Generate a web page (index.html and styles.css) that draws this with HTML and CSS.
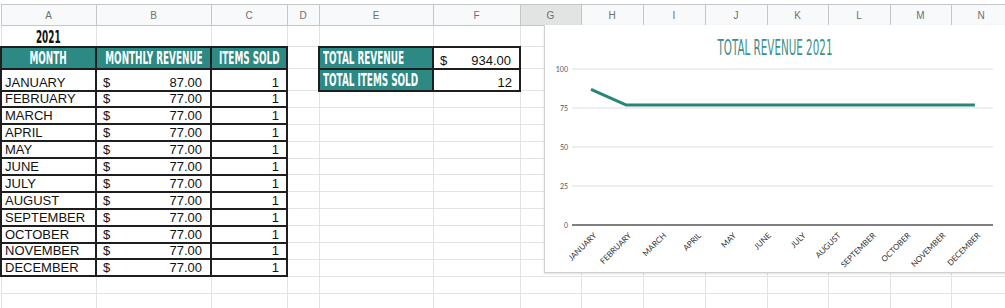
FILE: index.html
```html
<!DOCTYPE html>
<html>
<head>
<meta charset="utf-8">
<link rel="stylesheet" href="styles.css">
</head>
<body>
<div class="sheet">
  <div class="topstrip"></div>
  <table class="grid">
    <colgroup>
      <col class="cA"><col class="cB"><col class="cC"><col class="cD"><col class="cE"><col class="cF"><col class="cG"><col class="cH"><col class="cI"><col class="cJ"><col class="cK"><col class="cL"><col class="cM"><col class="cN">
    </colgroup>
    <thead>
      <tr class="hdr"><th>A</th><th>B</th><th>C</th><th>D</th><th>E</th><th>F</th><th class="sel">G</th><th>H</th><th>I</th><th>J</th><th>K</th><th>L</th><th>M</th><th>N</th></tr>
    </thead>
    <tbody>
      <tr class="r1"><td><div class="hc center"><span class="cond dark">2021</span></div></td><td></td><td></td><td></td><td></td><td></td><td></td><td></td><td></td><td></td><td></td><td></td><td></td><td></td></tr>
      <tr class="r2">
        <td class="bx teal"><div class="hc center"><span class="cond">MONTH</span></div></td>
        <td class="bx teal"><div class="hc center"><span class="cond">MONTHLY REVENUE</span></div></td>
        <td class="bx teal"><div class="hc center"><span class="cond">ITEMS SOLD</span></div></td>
        <td></td>
        <td class="bx teal"><div class="hc left"><span class="cond lo">TOTAL REVENUE</span></div></td>
        <td class="bx"><div class="acc"><span>$</span><span>934.00</span></div></td>
        <td></td><td></td><td></td><td></td><td></td><td></td><td></td><td></td>
      </tr>
      <tr class="r2">
        <td class="bx mo">JANUARY</td><td class="bx"><div class="acc"><span>$</span><span>87.00</span></div></td><td class="bx num">1</td>
        <td></td>
        <td class="bx teal"><div class="hc left"><span class="cond lo">TOTAL ITEMS SOLD</span></div></td>
        <td class="bx num">12</td>
        <td></td><td></td><td></td><td></td><td></td><td></td><td></td><td></td>
      </tr>
      <tr class="rs"><td class="bx mo">FEBRUARY</td><td class="bx"><div class="acc"><span>$</span><span>77.00</span></div></td><td class="bx num">1</td><td></td><td></td><td></td><td></td><td></td><td></td><td></td><td></td><td></td><td></td><td></td></tr>
      <tr class="rs"><td class="bx mo">MARCH</td><td class="bx"><div class="acc"><span>$</span><span>77.00</span></div></td><td class="bx num">1</td><td></td><td></td><td></td><td></td><td></td><td></td><td></td><td></td><td></td><td></td><td></td></tr>
      <tr class="rs"><td class="bx mo">APRIL</td><td class="bx"><div class="acc"><span>$</span><span>77.00</span></div></td><td class="bx num">1</td><td></td><td></td><td></td><td></td><td></td><td></td><td></td><td></td><td></td><td></td><td></td></tr>
      <tr class="rs"><td class="bx mo">MAY</td><td class="bx"><div class="acc"><span>$</span><span>77.00</span></div></td><td class="bx num">1</td><td></td><td></td><td></td><td></td><td></td><td></td><td></td><td></td><td></td><td></td><td></td></tr>
      <tr class="rs"><td class="bx mo">JUNE</td><td class="bx"><div class="acc"><span>$</span><span>77.00</span></div></td><td class="bx num">1</td><td></td><td></td><td></td><td></td><td></td><td></td><td></td><td></td><td></td><td></td><td></td></tr>
      <tr class="rs"><td class="bx mo">JULY</td><td class="bx"><div class="acc"><span>$</span><span>77.00</span></div></td><td class="bx num">1</td><td></td><td></td><td></td><td></td><td></td><td></td><td></td><td></td><td></td><td></td><td></td></tr>
      <tr class="rs"><td class="bx mo">AUGUST</td><td class="bx"><div class="acc"><span>$</span><span>77.00</span></div></td><td class="bx num">1</td><td></td><td></td><td></td><td></td><td></td><td></td><td></td><td></td><td></td><td></td><td></td></tr>
      <tr class="rs"><td class="bx mo">SEPTEMBER</td><td class="bx"><div class="acc"><span>$</span><span>77.00</span></div></td><td class="bx num">1</td><td></td><td></td><td></td><td></td><td></td><td></td><td></td><td></td><td></td><td></td><td></td></tr>
      <tr class="rs"><td class="bx mo">OCTOBER</td><td class="bx"><div class="acc"><span>$</span><span>77.00</span></div></td><td class="bx num">1</td><td></td><td></td><td></td><td></td><td></td><td></td><td></td><td></td><td></td><td></td><td></td></tr>
      <tr class="rs"><td class="bx mo">NOVEMBER</td><td class="bx"><div class="acc"><span>$</span><span>77.00</span></div></td><td class="bx num">1</td><td></td><td></td><td></td><td></td><td></td><td></td><td></td><td></td><td></td><td></td><td></td></tr>
      <tr class="rs"><td class="bx mo">DECEMBER</td><td class="bx"><div class="acc"><span>$</span><span>77.00</span></div></td><td class="bx num">1</td><td></td><td></td><td></td><td></td><td></td><td></td><td></td><td></td><td></td><td></td><td></td></tr>
      <tr class="re"><td></td><td></td><td></td><td></td><td></td><td></td><td></td><td></td><td></td><td></td><td></td><td></td><td></td><td></td></tr>
      <tr class="re"><td></td><td></td><td></td><td></td><td></td><td></td><td></td><td></td><td></td><td></td><td></td><td></td><td></td><td></td></tr>
    </tbody>
  </table>

  <div class="chart">
    <svg class="chart-svg" width="470" height="247" viewBox="0 0 470 247">
      <text class="ctitle" x="230" y="30" text-anchor="middle" textLength="115" lengthAdjust="spacingAndGlyphs">TOTAL REVENUE 2021</text>
      <g class="gridl">
        <line x1="27" y1="44" x2="448" y2="44"/>
        <line x1="27" y1="83" x2="448" y2="83"/>
        <line x1="27" y1="122" x2="448" y2="122"/>
        <line x1="27" y1="161" x2="448" y2="161"/>
      </g>
      <line class="axis" x1="27" y1="200" x2="448" y2="200"/>
      <g class="ylab" text-anchor="end">
        <text x="23" y="46.5">100</text>
        <text x="23" y="85.5">75</text>
        <text x="23" y="124.5">50</text>
        <text x="23" y="163.5">25</text>
        <text x="23" y="202.5">0</text>
      </g>
      <polyline class="series" points="46,64.3 80.9,79.9 115.8,79.9 150.7,79.9 185.6,79.9 220.5,79.9 255.4,79.9 290.3,79.9 325.2,79.9 360.1,79.9 395,79.9 429.9,79.9"/>
      <g class="xlab" text-anchor="end">
        <text x="52" y="211" transform="rotate(-45 52 211)">JANUARY</text>
        <text x="86.9" y="211" transform="rotate(-45 86.9 211)">FEBRUARY</text>
        <text x="121.8" y="211" transform="rotate(-45 121.8 211)">MARCH</text>
        <text x="156.7" y="211" transform="rotate(-45 156.7 211)">APRIL</text>
        <text x="191.6" y="211" transform="rotate(-45 191.6 211)">MAY</text>
        <text x="226.5" y="211" transform="rotate(-45 226.5 211)">JUNE</text>
        <text x="261.4" y="211" transform="rotate(-45 261.4 211)">JULY</text>
        <text x="296.3" y="211" transform="rotate(-45 296.3 211)">AUGUST</text>
        <text x="331.2" y="211" transform="rotate(-45 331.2 211)">SEPTEMBER</text>
        <text x="366.1" y="211" transform="rotate(-45 366.1 211)">OCTOBER</text>
        <text x="401" y="211" transform="rotate(-45 401 211)">NOVEMBER</text>
        <text x="435.9" y="211" transform="rotate(-45 435.9 211)">DECEMBER</text>
      </g>
    </svg>
  </div>
</div>
</body>
</html>
```
FILE: styles.css
```css
html, body {
  margin: 0;
  padding: 0;
  background: #ffffff;
}
body {
  width: 1005px;
  height: 308px;
  overflow: hidden;
  font-family: "Liberation Sans", Arial, sans-serif;
}
.sheet {
  position: relative;
  width: 1005px;
  height: 308px;
  overflow: hidden;
}
.topstrip {
  height: 4px;
  background: #ffffff;
}
.grid {
  border-collapse: collapse;
  table-layout: fixed;
  width: 1010px;
}
.cA { width: 95px; }
.cB { width: 115px; }
.cC { width: 76px; }
.cD { width: 32px; }
.cE { width: 114px; }
.cF { width: 87px; }
.cG { width: 61px; }
.cH { width: 62px; }
.cI { width: 62px; }
.cJ { width: 62px; }
.cK { width: 61px; }
.cL { width: 62px; }
.cM { width: 61px; }
.cN { width: 60px; }

.hdr th {
  height: 20px;
  padding: 0;
  background: #f8f9fa;
  border: 1px solid #c4c7c5;
  color: #6f6f6f;
  font-weight: normal;
  font-size: 10px;
  text-align: center;
  vertical-align: middle;
}
.hdr th.sel {
  background: #e2e3e3;
}
.grid td {
  padding: 0 3px;
  border: 1px solid #e2e3e3;
  font-size: 13px;
  line-height: 14px;
  color: #111;
  vertical-align: bottom;
  white-space: nowrap;
  overflow: visible;
}
.r1 { height: 21px; }
.r2 { height: 22px; }
.rs { height: 16.9px; }
.re { height: 17px; }

.grid td.bx {
  border: 2px solid #1e1e1e;
}
.grid td.teal {
  background: #2c8983;
  vertical-align: middle;
}
.grid td.num {
  text-align: right;
  padding-right: 7px;
}
.acc {
  display: flex;
  justify-content: space-between;
  padding: 0 5px 0 3px;
}
.hc {
  display: flex;
}
.hc.center { justify-content: center; }
.hc.left { justify-content: flex-start; }
.cond {
  display: inline-block;
  font-family: "DejaVu Sans Condensed", "DejaVu Sans", sans-serif;
  font-stretch: condensed;
  font-weight: bold;
  font-size: 17px;
  line-height: 18px;
  color: #ffffff;
  transform: scaleX(0.58);
  transform-origin: center;
  white-space: nowrap;
}
.cond.lo {
  transform-origin: left center;
}
.cond.dark {
  color: #111;
}

.chart {
  position: absolute;
  left: 544px;
  top: 25px;
  width: 470px;
  height: 247px;
  background: #ffffff;
  border-left: 1px solid #cfcfcf;
  border-bottom: 1px solid #cfcfcf;
  box-shadow: 0 1px 2px rgba(0, 0, 0, 0.12);
}
.chart-svg {
  display: block;
}
.ctitle {
  font-family: "DejaVu Sans Condensed", "DejaVu Sans", sans-serif;
  font-size: 22px;
  fill: #3f8f8a;
}
.gridl line {
  stroke: #dddddd;
  stroke-width: 1;
}
.axis {
  stroke: #555555;
  stroke-width: 1.5;
}
.ylab text {
  font-family: Lato, "DejaVu Sans", sans-serif;
  font-size: 7px;
  fill: #555555;
}
.series {
  fill: none;
  stroke: #2a8579;
  stroke-width: 3;
  stroke-linejoin: round;
}
.xlab text {
  font-family: Lato, "DejaVu Sans", sans-serif;
  font-size: 8px;
  fill: #333333;
}
```
